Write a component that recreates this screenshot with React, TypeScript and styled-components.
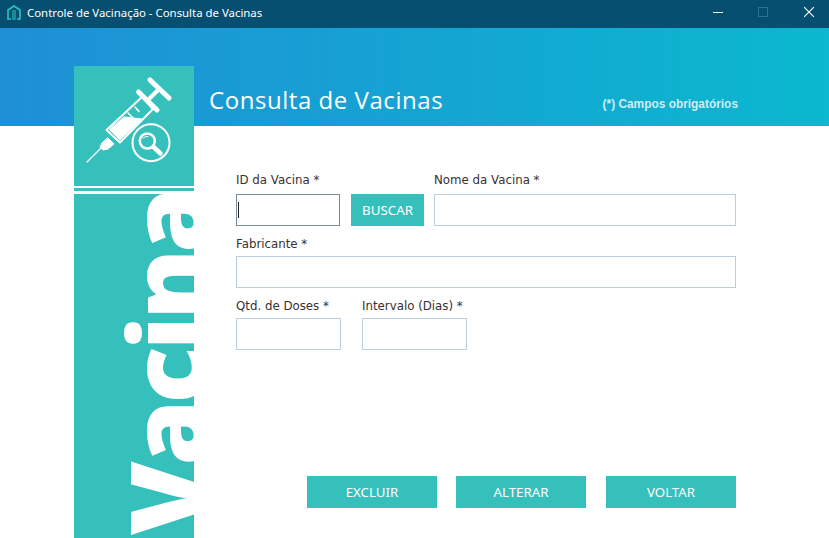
import styled, { createGlobalStyle } from 'styled-components';

const GlobalStyle = createGlobalStyle`
  html, body {
    margin: 0;
    padding: 0;
    height: 100%;
    overflow: hidden;
    background: #fff;
  }
  * { box-sizing: border-box; }
`;

const TEAL = '#36c0bc';

const SyringeIcon = () => (
  <svg width="120" height="120" viewBox="0 0 120 120" fill="none" stroke="#fff" strokeLinecap="round" strokeLinejoin="round">
    <path d="M76 14 L95 32" strokeWidth="5" />
    <path d="M85 23 L75 33" strokeWidth="4" />
    <path d="M64.5 26 L83 44" strokeWidth="5" />
    <path d="M68 31 L79 43 L46 76.5 L32.5 64 Z" strokeWidth="2" />
    <path d="M50.5 51 L68 53 L46 74 L35.5 63.5 Z" fill="#fff" strokeWidth="1" />
    <path d="M54 47 L59 52 M61 41 L65 45.5" strokeWidth="1.6" />
    <path d="M34 72 L40 78 L34 83 L29 84 L26 81 L28 77 Z" fill="#fff" strokeWidth="1" />
    <path d="M28 81 L13 96" strokeWidth="1.2" />
    <circle cx="77" cy="76.7" r="18.5" strokeWidth="2" />
    <circle cx="73.3" cy="75" r="7.5" strokeWidth="2.5" />
    <path d="M79.5 81 L86.5 87.5" strokeWidth="4.5" />
    <path d="M69 72 Q71 70 74 70.5" strokeWidth="1" />
  </svg>
);

const HomeIcon = () => (
  <svg width="14" height="15" viewBox="0 0 14 15" fill="none" stroke="#2fc4c0">
    <path d="M4 14 H1 V5 L7 1 L13 5 V14 H10" strokeWidth="1.6" />
    <path d="M5 6 H9 M5 8 H9 M5 10 H9 M5 12 H9 M5 14 H9" strokeWidth="1.1" />
  </svg>
);

export default function App() {
  return (
    <Page>
      <GlobalStyle />
      <TitleBar>
        <TitleLeft>
          <HomeIcon />
          <TitleText>Controle de Vacinação - Consulta de Vacinas</TitleText>
        </TitleLeft>
        <WindowControls>
          <MinimizeGlyph />
          <MaximizeGlyph />
          <CloseGlyph width="10" height="10" viewBox="0 0 10 10" stroke="#fff" strokeWidth="1.1">
            <path d="M0 0 L10 10 M10 0 L0 10" />
          </CloseGlyph>
        </WindowControls>
      </TitleBar>
      <Banner>
        <BannerTitle>Consulta de Vacinas</BannerTitle>
        <RequiredNote>(*) Campos obrigatórios</RequiredNote>
      </Banner>
      <Main>
        <Sidebar>
          <IconTile>
            <SyringeIcon />
          </IconTile>
          <SideStripe />
          <WordStrip>
            <Word>Vacina</Word>
          </WordStrip>
        </Sidebar>
        <FormArea>
          <FormRow>
            <Field $width={104} $labelGap={5}>
              <Label>ID da Vacina *</Label>
              <CaretWrap>
                <TextInput $focused />
                <Caret />
              </CaretWrap>
            </Field>
            <SearchButton>BUSCAR</SearchButton>
            <Field $grow $labelGap={5}>
              <Label>Nome da Vacina *</Label>
              <TextInput />
            </Field>
          </FormRow>
          <FormRow>
            <Field $grow>
              <Label>Fabricante *</Label>
              <TextInput />
            </Field>
          </FormRow>
          <FormRow $gap={21}>
            <Field $width={105}>
              <Label>Qtd. de Doses *</Label>
              <TextInput />
            </Field>
            <Field $width={105}>
              <Label>Intervalo (Dias) *</Label>
              <TextInput />
            </Field>
          </FormRow>
          <Actions>
            <ActionButton>EXCLUIR</ActionButton>
            <ActionButton>ALTERAR</ActionButton>
            <ActionButton>VOLTAR</ActionButton>
          </Actions>
        </FormArea>
      </Main>
    </Page>
  );
}

const Page = styled.div`
  width: 829px;
  height: 538px;
  display: flex;
  flex-direction: column;
  overflow: hidden;
  background: #fff;
`;

const TitleBar = styled.div`
  height: 28px;
  flex: none;
  background: #064f70;
  display: flex;
  align-items: center;
  justify-content: space-between;
  padding-bottom: 4px;
`;

const TitleLeft = styled.div`
  display: flex;
  align-items: center;
  gap: 6px;
  padding-left: 7px;
`;

const TitleText = styled.span`
  font: 11.4px 'Noto Sans', sans-serif;
  color: #fff;
`;

const WindowControls = styled.div`
  display: flex;
  align-items: center;
  gap: 35px;
  padding-right: 15px;
`;

const MinimizeGlyph = styled.span`
  width: 10px;
  height: 1px;
  background: #fff;
`;

const MaximizeGlyph = styled.span`
  width: 10px;
  height: 10px;
  border: 1px solid #33708e;
`;

const CloseGlyph = styled.svg`
  margin-left: 1px;
`;

const Banner = styled.div`
  height: 98px;
  flex: none;
  background: linear-gradient(90deg, #1f8fd6 0%, #0bb8cf 100%);
  display: flex;
  justify-content: space-between;
  padding: 54px 91px 0 209px;
`;

const BannerTitle = styled.h1`
  margin: 0;
  font: 400 24px/36px 'Open Sans', sans-serif;
  color: #fff;
  letter-spacing: 0.55px;
`;

const RequiredNote = styled.span`
  font: 700 11.9px/20px 'Liberation Sans', sans-serif;
  color: #cfeef4;
  padding-top: 12px;
`;

const Main = styled.div`
  flex: 1;
  min-height: 0;
  display: flex;
`;

const Sidebar = styled.aside`
  width: 120px;
  margin: -60px 0 0 74px;
  flex: none;
  display: flex;
  flex-direction: column;
  position: relative;
`;

const IconTile = styled.div`
  height: 120px;
  flex: none;
  background: ${TEAL};
`;

const SideStripe = styled.div`
  height: 3px;
  flex: none;
  margin: 2px 0 3px;
  background: ${TEAL};
`;

const WordStrip = styled.div`
  flex: 1;
  min-height: 0;
  overflow: hidden;
  background: ${TEAL};
  writing-mode: vertical-rl;
  transform: rotate(180deg);
  padding: 3px 17px 0 0;
`;

const Word = styled.span`
  font: 800 106px/150px 'Open Sans', sans-serif;
  color: #fff;
  white-space: nowrap;
  letter-spacing: -4px;
`;

const FormArea = styled.div`
  width: 500px;
  margin-left: 42px;
  padding-top: 42px;
  display: flex;
  flex-direction: column;
  gap: 4px;
`;

const FormRow = styled.div<{ $gap?: number }>`
  display: flex;
  align-items: flex-end;
  gap: ${(p) => p.$gap ?? 10}px;
  height: 58px;
`;

const Field = styled.div<{ $width?: number; $grow?: boolean; $labelGap?: number }>`
  display: flex;
  flex-direction: column;
  gap: ${(p) => p.$labelGap ?? 3}px;
  width: ${(p) => (p.$width ? `${p.$width}px` : 'auto')};
  flex: ${(p) => (p.$grow ? 1 : 'none')};
`;

const Label = styled.label`
  font: 11.8px/18px 'DejaVu Sans', sans-serif;
  color: #3a3030;
  white-space: nowrap;
`;

const CaretWrap = styled.div`
  position: relative;
`;

const TextInput = styled.input<{ $focused?: boolean }>`
  display: block;
  width: 100%;
  height: 32px;
  padding: 0 4px;
  background: #fff;
  border: 1px solid ${(p) => (p.$focused ? '#7a8a99' : '#b9cfe0')};
  border-radius: 0;
  outline: none;
`;

const Caret = styled.span`
  position: absolute;
  left: 2px;
  top: 8px;
  width: 1px;
  height: 16px;
  background: #222;
`;

const ButtonBase = styled.button`
  border: none;
  border-radius: 0;
  background: ${TEAL};
  color: #fff;
  font: 13.3px 'Noto Sans', sans-serif;
  height: 32px;
  padding: 0;
`;

const SearchButton = styled(ButtonBase)`
  width: 73px;
  flex: none;
  margin-left: 1px;
`;

const Actions = styled.div`
  display: flex;
  justify-content: flex-end;
  gap: 19px;
  margin-top: 122px;
`;

const ActionButton = styled(ButtonBase)`
  width: 130px;

  &:last-child {
    margin-left: 1px;
  }
`;
